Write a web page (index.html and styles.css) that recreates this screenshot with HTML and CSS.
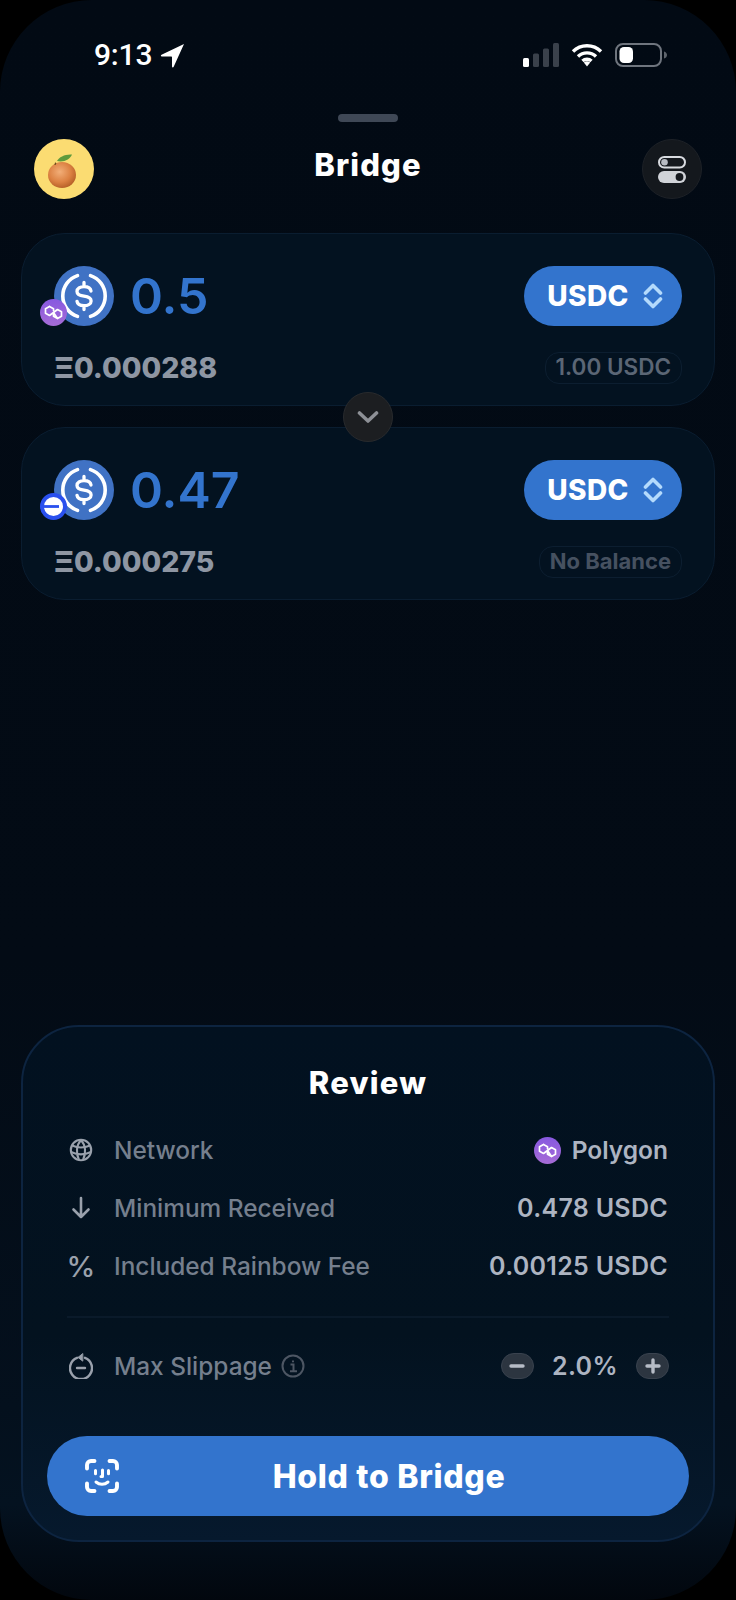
FILE: index.html
```html
<!DOCTYPE html>
<html lang="en">
<head>
<meta charset="utf-8">
<title>Bridge</title>
<link rel="stylesheet" href="styles.css">
</head>
<body>
<svg class="defs" width="0" height="0" aria-hidden="true">
  <defs>
    <linearGradient id="poly" x1="0" y1="0" x2="0" y2="1">
      <stop offset="0" stop-color="#8758e0"/>
      <stop offset="1" stop-color="#a66cd6"/>
    </linearGradient>
    <radialGradient id="orange" cx="0.42" cy="0.38" r="0.72">
      <stop offset="0" stop-color="#f2ae78"/>
      <stop offset="0.55" stop-color="#dc8142"/>
      <stop offset="1" stop-color="#a9551f"/>
    </radialGradient>
    <symbol id="usdc" viewBox="0 0 60 60">
      <circle cx="30" cy="30" r="30" fill="#4072c4"/>
      <path d="M23.5 9.6A21.5 21.5 0 0 0 23.5 50.4M36.5 9.6A21.5 21.5 0 0 1 36.5 50.4" fill="none" stroke="#fff" stroke-width="3.6" stroke-linecap="round"/>
      <path d="M37 25c-.4-2.900-3.200-4.400-7-4.400-3.900 0-7 1.900-7 4.800 0 3 2.900 4.100 7 4.700 4.100.6 7.100 1.700 7.100 4.800 0 3-3.200 4.800-7.100 4.800-3.800 0-6.600-1.500-7-4.400M30 16.500v4M30 39.600v4" fill="none" stroke="#fff" stroke-width="3.300" stroke-linecap="round"/>
    </symbol>
    <symbol id="polygon" viewBox="0 0 27 27">
      <circle cx="13.500" cy="13.500" r="13.500" fill="url(#poly)"/>
      <path d="M9.500 7.500 5.500 9.700v4.600l4 2.200 8-6 4 2.200v4.600l-4 2.200-4-2.200V15.500M13.500 11.500V9.700l-4-2.200M13.500 13.500l4 6" fill="none" stroke="#fff" stroke-width="1.700" stroke-linejoin="round" stroke-linecap="round"/>
    </symbol>
  </defs>
</svg>
<main class="screen">
  <div class="status">
    <div class="status-left">
      <span class="time">9:13</span>
      <svg class="loc" width="25" height="25" viewBox="0 0 25 25"><path d="M24 1 1.500 11.800c-1 .5-.7 1.700.3 1.700h9.200c.7 0 1 .3 1 1v9c0 1 1.200 1.300 1.700.3z" fill="#fff"/></svg>
    </div>
    <div class="status-right">
      <svg width="36" height="24" viewBox="0 0 36 24"><rect x="0" y="15" width="6" height="9" rx="1.500" fill="#fff"/><rect x="10" y="10.500" width="6" height="13.500" rx="1.500" fill="#3a414b"/><rect x="20" y="5.500" width="6" height="18.500" rx="1.500" fill="#3a414b"/><rect x="30" y="0" width="6" height="24" rx="1.500" fill="#3a414b"/></svg>
      <svg width="32" height="24" viewBox="0 0 32 24"><path d="M2 8.500a20 20 0 0 1 28 0M7 13.500a13 13 0 0 1 18 0M11.500 18a6.500 6.500 0 0 1 9 0" fill="none" stroke="#fff" stroke-width="3.400"/><path d="M16 23.500 12.800 19.500a5 5 0 0 1 6.400 0z" fill="#fff"/></svg>
      <svg width="53" height="24" viewBox="0 0 53 24"><rect x="1" y="1" width="45" height="22" rx="7" fill="none" stroke="#6f757e" stroke-width="2"/><rect x="4.500" y="4" width="13.500" height="16" rx="4.500" fill="#fff"/><path d="M49 8.500c2 .5 3 2 3 3.500s-1 3-3 3.500z" fill="#5e646c"/></svg>
    </div>
  </div>
  <div class="handle"></div>
  <header class="header">
    <div class="avatar">
      <svg width="60" height="60" viewBox="0 0 60 60"><ellipse cx="28" cy="36" rx="14" ry="13" fill="url(#orange)"/><path d="M23 22c2-4 8-7 15-6.500-2 5-8 8-15 6.500z" fill="#5f9a3c"/><path d="M21 23.500c.8 0 1.200.4 1.200 1l-.6 1.500h-1.200z" fill="#6b4a1c"/></svg>
    </div>
    <h1 class="title">Bridge</h1>
    <button class="round-btn" type="button" aria-label="Settings">
      <svg width="28" height="27" viewBox="0 0 28 27"><rect x="1" y="1" width="26" height="10.500" rx="5.250" fill="none" stroke="#d8dbe0" stroke-width="2"/><circle cx="6.500" cy="6.250" r="3.300" fill="#b8bcc3"/><rect y="15" width="28" height="12" rx="6" fill="#d0d3d8"/><circle cx="21.500" cy="21" r="3.900" fill="#14181d"/></svg>
    </button>
  </header>

  <section class="swap">
    <div class="card">
      <div class="row">
        <div class="token">
          <svg class="token-img" width="60" height="60"><use href="#usdc"/></svg>
          <svg class="badge" width="27" height="27"><use href="#polygon"/></svg>
        </div>
        <span class="amount">0.5</span>
        <button class="pill" type="button">USDC
          <svg width="20" height="26" viewBox="0 0 20 26"><path d="M2.500 10 10 2.500l7.500 7.500M2.500 16 10 23.500l7.500-7.500" fill="none" stroke="#b4dafc" stroke-width="3.600" stroke-linecap="round" stroke-linejoin="round"/></svg>
        </button>
      </div>
      <div class="row sub">
        <span class="native">Ξ0.000288</span>
        <span class="balance">1.00 USDC</span>
      </div>
    </div>
    <div class="card">
      <div class="row">
        <div class="token">
          <svg class="token-img" width="60" height="60"><use href="#usdc"/></svg>
          <svg class="badge" width="27" height="27" viewBox="0 0 27 27"><circle cx="13.500" cy="13.500" r="11.500" fill="#fff" stroke="#2a50ee" stroke-width="4"/><path d="M4 13.500h15" stroke="#2a50ee" stroke-width="2.800"/></svg>
        </div>
        <span class="amount">0.47</span>
        <button class="pill" type="button">USDC
          <svg width="20" height="26" viewBox="0 0 20 26"><path d="M2.500 10 10 2.500l7.500 7.500M2.500 16 10 23.500l7.500-7.500" fill="none" stroke="#b4dafc" stroke-width="3.600" stroke-linecap="round" stroke-linejoin="round"/></svg>
        </button>
      </div>
      <div class="row sub">
        <span class="native">Ξ0.000275</span>
        <span class="balance faint">No Balance</span>
      </div>
    </div>
    <button class="flip" type="button" aria-label="Flip">
      <svg width="22" height="14" viewBox="0 0 22 14"><path d="M2.500 3 11 11l8.500-8" fill="none" stroke="#8d9096" stroke-width="3.600" stroke-linecap="round" stroke-linejoin="round"/></svg>
    </button>
  </section>

  <section class="review">
    <h2 class="review-title">Review</h2>
    <ul class="details">
      <li class="detail">
        <svg class="detail-icon" width="24" height="24" viewBox="0 0 24 24" fill="none" stroke="#9aa1ac" stroke-width="2.100"><circle cx="12" cy="12" r="10.200"/><path d="M3 7.500c5.500 2.500 12.500 2.500 18 0M2 14c6 2.800 14 2.800 20 0M12 2c-4.500 5-5.500 13-2 20M12 2c4.500 5 5.500 13 2 20"/></svg>
        <span class="label">Network</span>
        <span class="value name"><svg class="value-icon" width="27" height="27"><use href="#polygon"/></svg>Polygon</span>
      </li>
      <li class="detail">
        <svg class="detail-icon" width="24" height="24" viewBox="0 0 24 24" fill="none" stroke="#9aa1ac" stroke-width="2.600" stroke-linecap="round" stroke-linejoin="round"><path d="M12 2v19M4.500 13.500 12 21l7.500-7.500"/></svg>
        <span class="label">Minimum Received</span>
        <span class="value">0.478 USDC</span>
      </li>
      <li class="detail">
        <span class="detail-icon percent">%</span>
        <span class="label">Included Rainbow Fee</span>
        <span class="value">0.00125 USDC</span>
      </li>
    </ul>
    <hr class="divider">
    <div class="detail">
      <svg class="detail-icon" width="24" height="26" viewBox="0 0 24 26" fill="none" stroke="#9aa1ac" stroke-width="2.400" stroke-linecap="round"><path d="M16 4.800A11 11 0 1 1 8 4.800"/><path d="M8 15h8"/><path d="M13.500 .8 9 4.400l4.500 3.500z" fill="#9aa1ac" stroke-width="1"/></svg>
      <span class="label">Max Slippage</span>
      <svg class="info" width="24" height="24" viewBox="0 0 24 24" fill="none" stroke="#4d5663" stroke-width="2"><circle cx="12" cy="12" r="10.500"/><path d="M9.500 10.500h3v6.500M9 17.200h7"/><path d="M12 6.500v1.800"/></svg>
      <div class="stepper">
        <button class="step" type="button" aria-label="Decrease"><svg width="16" height="16" viewBox="0 0 16 16"><path d="M2 8h12" stroke="#b6bcc6" stroke-width="3.400" stroke-linecap="round"/></svg></button>
        <span class="step-value">2.0%</span>
        <button class="step" type="button" aria-label="Increase"><svg width="16" height="16" viewBox="0 0 16 16"><path d="M2 8h12M8 2v12" stroke="#b6bcc6" stroke-width="3.400" stroke-linecap="round"/></svg></button>
      </div>
    </div>
    <button class="hold" type="button">
      <svg class="face" width="34" height="34" viewBox="0 0 34 34" fill="none" stroke="#fff" stroke-width="3.900" stroke-linecap="round" stroke-linejoin="round"><path d="M2 9.500V6a4 4 0 0 1 4-4h3.500M24.500 2H28a4 4 0 0 1 4 4v3.500M2 24.500V28a4 4 0 0 0 4 4h3.500M32 24.500V28a4 4 0 0 1-4 4h-3.500"/><path d="M10.500 11.500v3.200M23.500 11.500v3.200M17.500 11v6.500h-1.500M11 23c3.500 3 8.500 3 12 0" stroke-width="3"/></svg>
      <span>Hold to Bridge</span>
    </button>
  </section>
</main>
</body>
</html>
```
FILE: styles.css
```css
* { box-sizing: border-box; }
html, body { margin: 0; padding: 0; background: #000; }
body { width: 736px; height: 1600px; overflow: hidden; font-family: Inter, "Liberation Sans", sans-serif; }
.defs { position: absolute; }
button { font-family: inherit; border: 0; padding: 0; margin: 0; cursor: pointer; }
h1, h2, ul { margin: 0; padding: 0; list-style: none; }

.screen {
  width: 736px; height: 1600px; padding: 0 21px 58px;
  border-radius: 92px;
  background: linear-gradient(180deg, #020a14 0%, #030b15 60%, #04101d 88%, #041220 94%, #02070e 100%);
  display: flex; flex-direction: column;
}

.status { display: flex; justify-content: space-between; align-items: center; height: 28px; margin-top: 41px; padding: 0 47px 0 73px; }
.status-left { display: flex; align-items: center; gap: 8px; }
.time { color: #fff; font-size: 30px; font-weight: 500; font-family: Roboto, Inter, sans-serif; letter-spacing: -.2px; line-height: 28px; }
.status-right { display: flex; align-items: center; gap: 12px; }

.handle { align-self: center; width: 60px; height: 8px; border-radius: 4px; background: #3f4856; margin-top: 45px; }

.header { display: flex; justify-content: space-between; align-items: center; margin-top: 17px; padding: 0 13px; }
.avatar { width: 60px; height: 60px; border-radius: 50%; background: #fbdc72; flex: none; }
.avatar svg { display: block; }
.title { color: #fff; font-size: 31px; font-weight: 800; letter-spacing: 1.100px; line-height: 36px; margin-bottom: 8px; }
.round-btn { width: 60px; height: 60px; border-radius: 50%; background: #14181d; border: 1px solid #1d2127; display: flex; align-items: center; justify-content: center; }

.swap { position: relative; display: flex; flex-direction: column; gap: 21px; margin-top: 34px; }
.card { height: 173px; padding: 32px 32px 0; border-radius: 44px; background: #031220; border: 1.5px solid #0a1d30; }
.row { display: flex; align-items: center; }
.sub { justify-content: space-between; margin-top: 26px; height: 32px; }
.token { position: relative; width: 60px; height: 60px; flex: none; }
.token-img { display: block; }
.badge { position: absolute; left: -14px; bottom: 0; }
.amount { color: #3374cd; font-size: 50px; font-weight: 600; margin-left: 16px; line-height: 60px; height: 60px; flex: 1; }
.pill { width: 158px; height: 60px; border-radius: 30px; background: #3374cd; color: #fff; font-size: 28px; font-weight: 800; letter-spacing: .4px; display: flex; align-items: center; justify-content: center; gap: 14px; padding-left: 4px; }
.native { color: #8e96a3; font-size: 28.500px; font-weight: 800; line-height: 30px; }
.balance { color: #5b6675; font-size: 22.500px; font-weight: 600; height: 32px; line-height: 28px; padding: 0 10px; border: 1.5px solid #0c1e30; border-radius: 14px; }
.balance.faint { color: #465160; font-size: 22px; font-weight: 700; }
.flip { position: absolute; left: 322px; top: 159px; width: 50px; height: 50px; border-radius: 50%; background: #1c1e21; border: 1.5px solid #282a2d; display: flex; align-items: center; justify-content: center; }

.review {
  margin-top: auto; height: 517px; padding: 38px 24px 24px;
  border-radius: 58px; border: 2px solid #0d2440;
  background: linear-gradient(180deg, #021120 0%, #03121f 60%, #06192d 100%);
  display: flex; flex-direction: column;
}
.review-title { color: #fff; font-size: 31px; font-weight: 800; letter-spacing: 1.200px; text-align: center; line-height: 36px; }
.details { display: flex; flex-direction: column; gap: 28px; margin-top: 34px; padding: 0 21px; }
.detail { display: flex; align-items: center; height: 30px; font-size: 24.400px; }
.review > .detail { margin-top: 33px; padding: 0 21px; }
.detail-icon { flex: none; margin-left: 1px; }
.percent { width: 24px; color: #9aa1ac; font-size: 29px; font-weight: 500; text-align: center; display: flex; justify-content: center; }
.label { color: #757f8d; font-weight: 500; margin-left: 21px; }
.value { color: #adb4c1; font-size: 25px; letter-spacing: .3px; font-weight: 600; margin-left: auto; display: flex; align-items: center; gap: 11px; }
.value.name { font-size: 24.500px; letter-spacing: 0; }
.divider { height: 2px; border: 0; background: #0a1a2a; margin: 35px 20px 0; }
.info { margin-left: 9px; }
.stepper { margin-left: auto; margin-right: -1px; display: flex; align-items: center; gap: 18px; }
.step { width: 33px; height: 26px; border-radius: 13px; background: #2c3540; border: 1px solid #39424e; display: flex; align-items: center; justify-content: center; }
.step-value { color: #adb4c1; font-size: 25px; font-weight: 600; letter-spacing: .4px; }

.hold { position: relative; margin-top: auto; height: 80px; border-radius: 40px; background: #3374cd; color: #fff; font-size: 32px; font-weight: 800; letter-spacing: .7px; display: flex; align-items: center; justify-content: center; padding-left: 42px; }
.face { position: absolute; left: 38px; top: 23px; }
```
